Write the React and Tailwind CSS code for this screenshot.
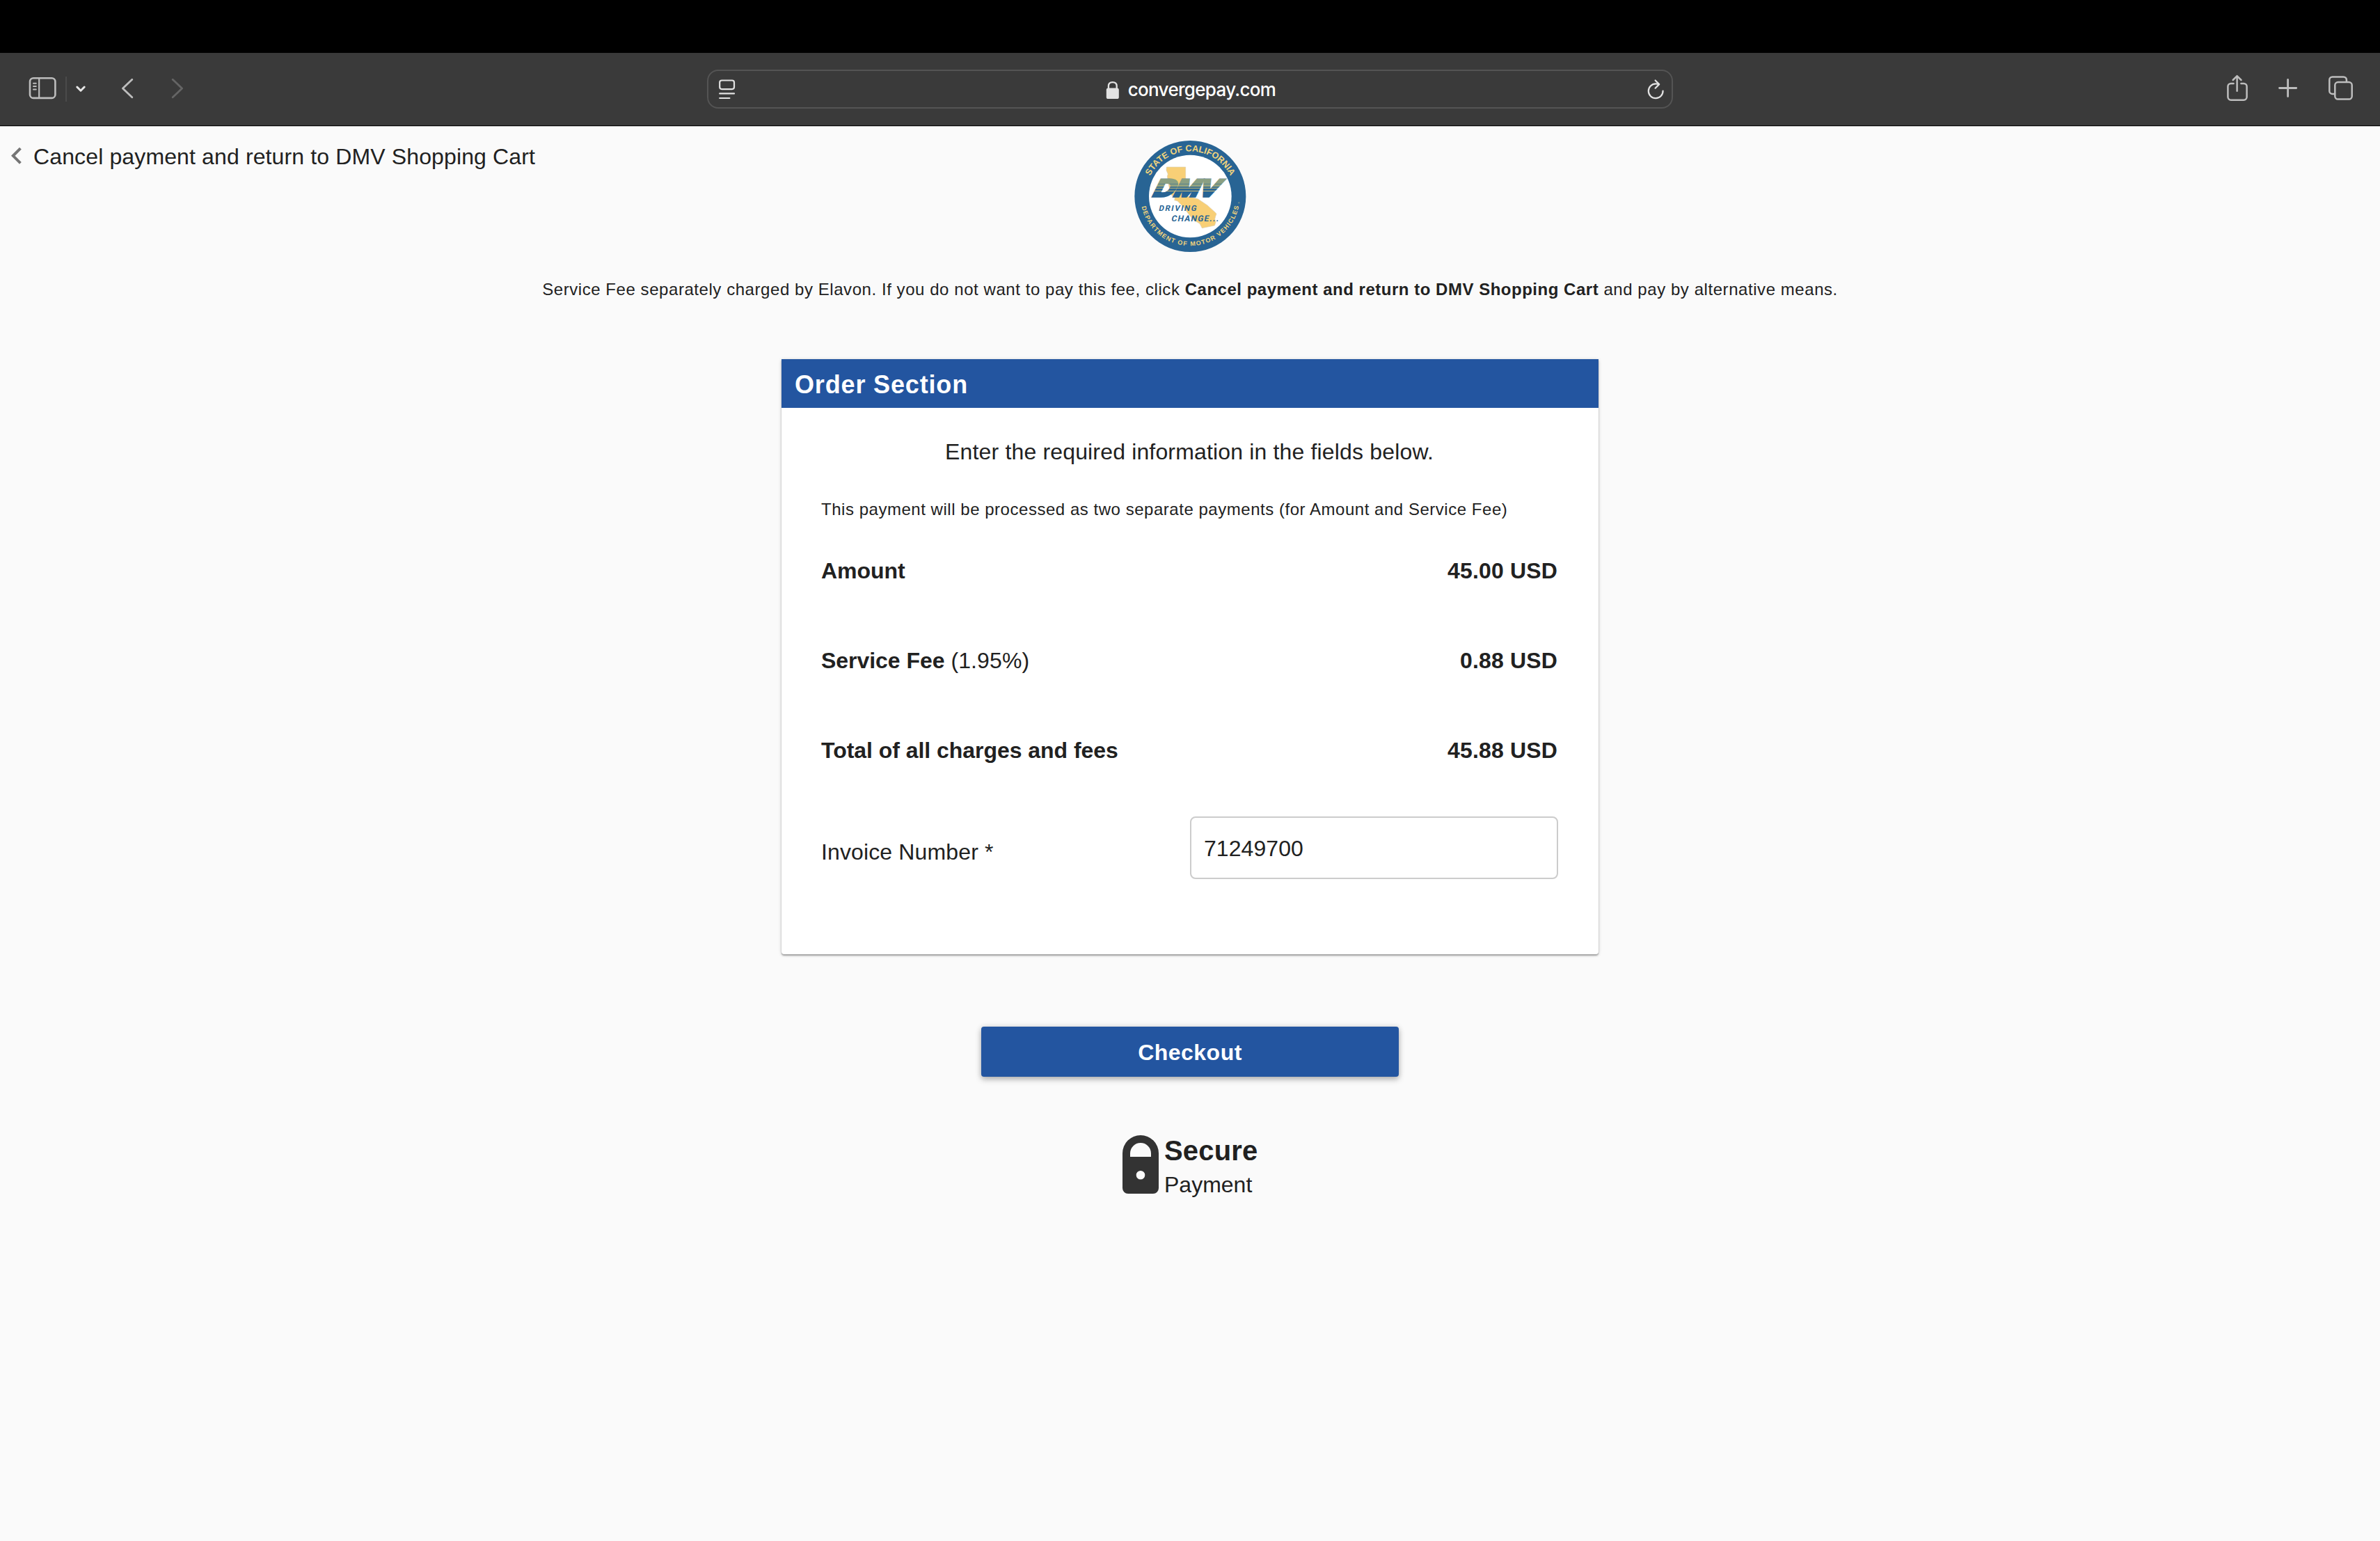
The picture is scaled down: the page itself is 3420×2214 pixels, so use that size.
import React from "react";

function SidebarIcon() {
  return (
    <svg className="h-12 w-11" viewBox="40 104 44 48" fill="none" stroke="#bdbdbd" strokeWidth="2.6" strokeLinecap="round">
      <rect x="43" y="112.3" width="36.4" height="28.6" rx="5" />
      <path d="M56.2 112.3v28.6" strokeWidth="2.2" />
      <path d="M48 119.7h3.8M48 124h3.8M48 128.5h3.8" strokeWidth="2" />
    </svg>
  );
}

function ChevronDown() {
  return (
    <svg className="h-12 w-6" viewBox="104 104 24 48" fill="none" stroke="#e6e6e6" strokeWidth="3" strokeLinecap="round" strokeLinejoin="round">
      <path d="M110.8 125l5.2 5.2 5.2-5.2" />
    </svg>
  );
}

function NavChevron({ forward }) {
  return (
    <svg className="h-12 w-8" viewBox="0 0 32 48" fill="none" stroke={forward ? "#656565" : "#bdbdbd"} strokeWidth="2.8" strokeLinecap="round" strokeLinejoin="round">
      <path d={forward ? "M8.2 10.2l13.4 12.8-13.4 12.8" : "M21.8 10.2L8.4 23l13.4 12.8"} />
    </svg>
  );
}

function ReaderIcon() {
  return (
    <svg className="h-12 w-7 shrink-0" viewBox="1032 104 28 48" fill="none" stroke="#e2e2e2" strokeWidth="2.2" strokeLinecap="round">
      <rect x="1034.2" y="115.5" width="20.8" height="12.6" rx="3" />
      <path d="M1034.2 134.4h20.8M1034.2 141h14.2" />
    </svg>
  );
}

function AddressLock() {
  return (
    <svg className="h-12 w-5 shrink-0" viewBox="1589 104 20 48" fill="none">
      <rect x="1589.8" y="126.6" width="18" height="15.4" rx="2.6" fill="#e2e2e2" />
      <path d="M1592.9 128v-4.4c0-3.4 2.3-5.5 5.9-5.5s5.9 2.1 5.9 5.5v4.4" stroke="#e2e2e2" strokeWidth="2.3" />
    </svg>
  );
}

function ReloadIcon() {
  return (
    <svg className="h-12 w-8 shrink-0" viewBox="2364 104 32 48" fill="none" stroke="#e2e2e2" strokeWidth="2.2" strokeLinecap="round" strokeLinejoin="round">
      <path d="M2389.6 130.6a10.4 10.4 0 1 1-10.4-10.2c1.6 0 3 .2 4.6.6" />
      <path d="M2378.6 115.5l5.6 5.6-5.6 5.6" />
    </svg>
  );
}

function ShareIcon() {
  return (
    <svg className="h-12 w-10" viewBox="3196 104 40 48" fill="none" stroke="#bdbdbd" strokeWidth="2.5" strokeLinecap="round" strokeLinejoin="round">
      <path d="M3209.6 119.9h-3.8a4.4 4.4 0 0 0-4.4 4.4v15a4.4 4.4 0 0 0 4.4 4.4h18.4a4.4 4.4 0 0 0 4.4-4.4v-15a4.4 4.4 0 0 0-4.4-4.4h-3.8" />
      <path d="M3214.6 130.8v-21.4M3208.7 115l5.9-5.9 5.9 5.9" />
    </svg>
  );
}

function PlusIcon() {
  return (
    <svg className="ml-[34px] h-12 w-9" viewBox="3270 104 36 48" fill="none" stroke="#bdbdbd" strokeWidth="2.8" strokeLinecap="round">
      <path d="M3275.5 126.5h24.2M3287.6 114.4v24.2" />
    </svg>
  );
}

function TabsIcon() {
  return (
    <svg className="ml-9 h-12 w-11" viewBox="3342 104 44 48" fill="none" stroke="#bdbdbd" strokeWidth="2.5" strokeLinecap="round">
      <path d="M3354.5 135h-2.9a4.3 4.3 0 0 1-4.3-4.3v-16a4.3 4.3 0 0 1 4.3-4.3h16a4.3 4.3 0 0 1 4.3 4.3v3" />
      <rect x="3355.3" y="118" width="24.4" height="24.6" rx="4.4" />
    </svg>
  );
}

function BrowserBar() {
  return (
    <header className="flex h-[104px] items-center bg-[#3a3a3a]">
      <div className="flex w-[1016px] items-center pl-10">
        <SidebarIcon />
        <span className="ml-2.5 h-9 w-0.5 bg-[#4a4a4a]" />
        <div className="ml-2 flex gap-10">
          <ChevronDown />
          <NavChevron />
          <NavChevron forward />
        </div>
      </div>
      <div className="flex h-14 w-[1388px] items-center rounded-2xl border-2 border-[#545454] pr-1.5 pl-3.5">
        <ReaderIcon />
        <div className="flex flex-1 items-center justify-center pr-0.5">
          <AddressLock />
          <span className="ml-3 pt-0.5 font-['Inter',sans-serif] text-[26px] leading-[40px] font-medium tracking-[-0.69px] text-white">convergepay.com</span>
        </div>
        <ReloadIcon />
      </div>
      <div className="flex w-[1016px] items-center justify-end pr-[34px]">
        <ShareIcon />
        <PlusIcon />
        <TabsIcon />
      </div>
    </header>
  );
}

function DmvSeal({ className }) {
  return (
    <svg className={className} viewBox="0 0 540 540">
      <defs>
        <path id="seal-top" d="M77 276a194 194 0 0 1 388 0" />
        <path id="seal-bottom" d="M57.5 261A214 214 0 1 0 484.5 261" />
        <linearGradient id="dmv-stripes" gradientUnits="userSpaceOnUse" x1="0" y1="-84" x2="0" y2="0">
          <stop offset="0" stopColor="#5f8288" />
          <stop offset=".05" stopColor="#5f8288" />
          <stop offset=".05" stopColor="#8a9f82" />
          <stop offset=".3" stopColor="#8a9f82" />
          <stop offset=".3" stopColor="#557f8c" />
          <stop offset=".34" stopColor="#557f8c" />
          <stop offset=".34" stopColor="#93a37f" />
          <stop offset=".44" stopColor="#93a37f" />
          <stop offset=".44" stopColor="#46768e" />
          <stop offset=".5" stopColor="#46768e" />
          <stop offset=".5" stopColor="#a5a878" />
          <stop offset=".56" stopColor="#a5a878" />
          <stop offset=".56" stopColor="#2f6892" />
          <stop offset=".65" stopColor="#2f6892" />
          <stop offset=".65" stopColor="#c9b877" />
          <stop offset=".7" stopColor="#c9b877" />
          <stop offset=".7" stopColor="#286494" />
          <stop offset="1" stopColor="#286494" />
        </linearGradient>
      </defs>
      <circle cx="271" cy="276" r="240" fill="#286494" />
      <circle cx="271" cy="276" r="178" fill="#fff" />
      <path d="M169 150H251V196L260 276 305 288 345 315 378 345 384 352 380 362 377 374 381 388 376 402 322 413 312 394 285 378 268 358 240 320 216 296 203 293 205 284 190 270 180 236 172 190 175 180 168 164Z" fill="#f8cf76" stroke="#dccfae" strokeWidth="2" />
      <g fill="#f2d47c" fontFamily="'Liberation Sans', Arial, sans-serif" fontWeight="700">
        <text fontSize="38" textLength="428" lengthAdjust="spacing">
          <textPath href="#seal-top" startOffset="91">STATE OF CALIFORNIA</textPath>
        </text>
        <text fontSize="27" textLength="583" lengthAdjust="spacing">
          <textPath href="#seal-bottom" startOffset="60">DEPARTMENT OF MOTOR VEHICLES</textPath>
        </text>
      </g>
      <circle cx="481" cy="304" r="2.5" fill="none" stroke="#f2d47c" />
      <g transform="translate(101 281) skewX(-26.5)" fontFamily="'Liberation Sans', Arial, sans-serif" fontWeight="700" fontSize="103" fill="url(#dmv-stripes)" stroke="url(#dmv-stripes)" strokeWidth="11">
        <text y="-5.5" textLength="279" lengthAdjust="spacingAndGlyphs">DMV</text>
      </g>
      <g fill="#286494" fontFamily="Roboto, sans-serif" fontWeight="700">
        <text transform="translate(134 340) skewX(-12)" fontSize="34" textLength="162" lengthAdjust="spacing">DRIVING</text>
        <text transform="translate(188 384) skewX(-12)" fontSize="36" textLength="204" lengthAdjust="spacing">CHANGE...</text>
      </g>
    </svg>
  );
}

function PadlockIcon() {
  return (
    <svg className="h-[84px] w-[52px]" viewBox="0 0 52 84">
      <path fillRule="evenodd" fill="#333" d="M0 26a26 26 0 0 1 52 0v50a8 8 0 0 1-8 8H8a8 8 0 0 1-8-8zM11 31h30v-5a15 15 0 0 0-30 0zM26 51a6.3 6.3 0 1 0 0 12.6 6.3 6.3 0 0 0 0-12.6z" />
    </svg>
  );
}

function AmountRow({ label, note, value }) {
  return (
    <div className="flex justify-between">
      <div>
        <span className="font-bold tracking-[-0.04px]">{label}</span>
        {note && <span className="tracking-[0.1px]"> {note}</span>}
      </div>
      <span className="font-bold tracking-[0.15px]">{value}</span>
    </div>
  );
}

function OrderSection() {
  return (
    <section className="mx-auto mt-[84px] h-[855px] w-[1174px] rounded-b bg-white shadow-[0_2px_2px_rgba(0,0,0,0.28),0_1px_5px_rgba(0,0,0,0.2)]">
      <h2 className="h-[70px] bg-[#2355a0] pt-0.5 pl-[19px] text-[36px] leading-[70px] font-bold tracking-[0.84px] text-white">Order Section</h2>
      <div className="pt-[43px] pr-[59px] pl-[57px] text-[32px] leading-[40px]">
        <p className="text-center tracking-[0.16px]">Enter the required information in the fields below.</p>
        <p className="mt-[47px] text-2xl leading-8 tracking-[0.53px]">This payment will be processed as two separate payments (for Amount and Service Fee)</p>
        <div className="mt-[52px] flex flex-col gap-[89px]">
          <AmountRow label="Amount" value="45.00 USD" />
          <AmountRow label="Service Fee" note="(1.95%)" value="0.88 USD" />
          <AmountRow label="Total of all charges and fees" value="45.88 USD" />
        </div>
        <div className="-mr-px mt-[75px] flex items-center justify-between">
          <label htmlFor="invoice" className="pt-3 tracking-[0.13px]">Invoice Number *</label>
          <input
            id="invoice"
            defaultValue="71249700"
            className="h-[90px] w-[529px] rounded-lg border-2 border-[#ccc] bg-white pt-0.5 pl-[18px] tracking-[0.06px] outline-none"
          />
        </div>
      </div>
    </section>
  );
}

export default function App() {
  return (
    <div className="h-[2214px] w-[3420px] overflow-hidden bg-[#fafafa] font-['Liberation_Sans',Arial,sans-serif] text-[#212121]">
      <div className="h-[76px] bg-black" />
      <BrowserBar />
      <div className="h-px bg-black" />
      <div className="h-px bg-[#b4b4b4]" />
      <main className="pt-2">
        <div className="grid grid-cols-[1fr_180px_1fr]">
          <a className="mt-[15px] flex h-10 items-center pl-3.5">
            <svg className="h-10 w-5" viewBox="0 0 20 40" fill="none" stroke="#757575" strokeWidth="4">
              <path d="M15.4 8.2L4.8 18.8l10.6 10.6" />
            </svg>
            <span className="ml-3.5 text-[32px] leading-[40px] tracking-[0.13px]">Cancel payment and return to DMV Shopping Cart</span>
          </a>
          <DmvSeal className="size-[180px]" />
        </div>
        <p className="mt-[30px] text-center text-2xl leading-8 tracking-[0.56px]">
          Service Fee separately charged by Elavon. If you do not want to pay this fee, click{" "}
          <strong className="tracking-[0.517px]">Cancel payment and return to DMV Shopping Cart</strong> and pay by alternative means.
        </p>
        <OrderSection />
        <button className="mx-auto mt-[104px] block h-[72px] w-[600px] rounded bg-[#2355a0] pt-0.5 text-[32px] leading-[40px] font-bold tracking-[0.48px] text-white shadow-[0_4px_8px_rgba(0,0,0,0.26),0_0_8px_rgba(0,0,0,0.12)]">
          Checkout
        </button>
        <div className="mt-[84px] flex justify-center pl-0.5">
          <PadlockIcon />
          <div className="ml-2 w-[136px]">
            <div className="text-[40px] leading-[44px] font-bold tracking-[0.17px]">Secure</div>
            <div className="mt-[7px] text-[32px] leading-[40px]">Payment</div>
          </div>
        </div>
      </main>
    </div>
  );
}
